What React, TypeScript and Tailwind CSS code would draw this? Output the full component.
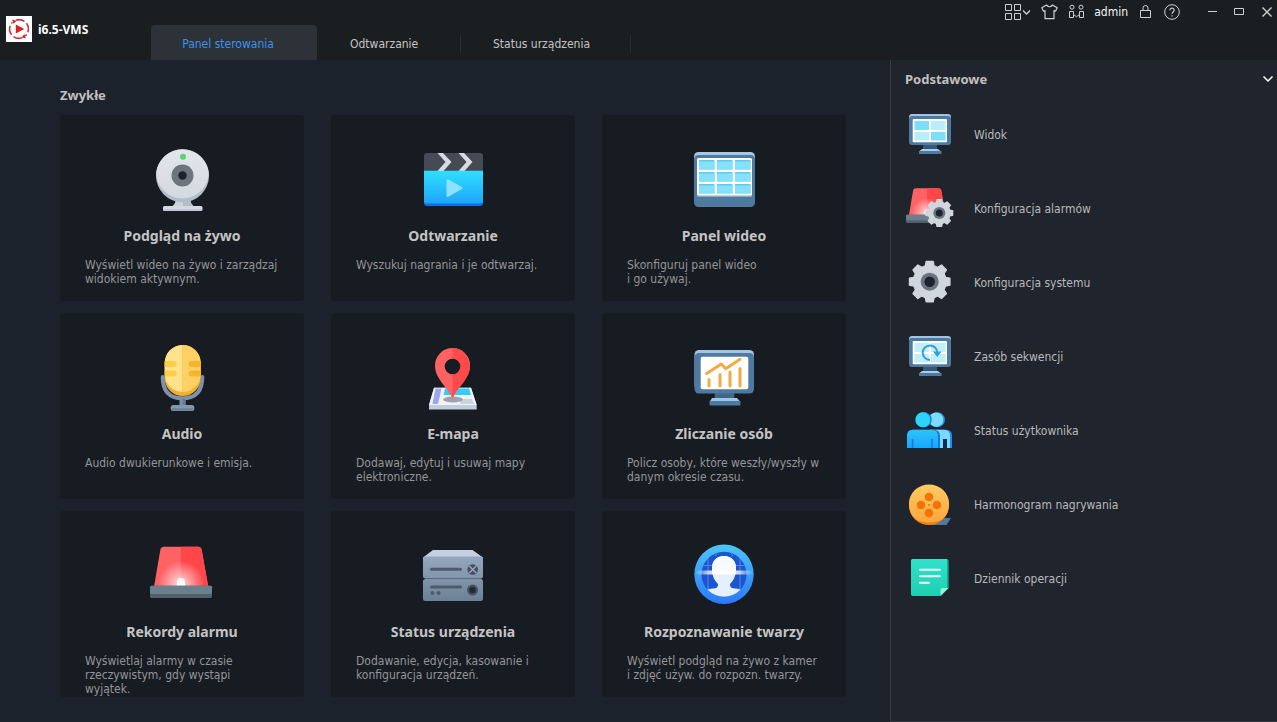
import type { ReactNode } from 'react';

const BODY_FONT = "font-['DejaVu_Sans_Condensed','DejaVu_Sans',sans-serif]";
const BOLD_FONT = "font-['Noto_Sans',sans-serif] font-bold";

function gearPath(cx: number, cy: number, r: number) {
  const points: string[] = [];
  for (let i = 0; i < 8; i += 1) {
    const base = (i * Math.PI) / 4 - Math.PI / 2;
    const corners: [number, number][] = [
      [-0.27, 0.8],
      [-0.17, 1],
      [0.17, 1],
      [0.27, 0.8],
    ];
    corners.forEach(([da, k]) => {
      points.push(`${(cx + Math.cos(base + da) * r * k).toFixed(2)} ${(cy + Math.sin(base + da) * r * k).toFixed(2)}`);
    });
  }
  return `M${points.join('L')}Z`;
}

function Gear({ cx, cy, r }: { cx: number; cy: number; r: number }) {
  return (
    <g>
      <path d={gearPath(cx, cy, r - 0.5)} fill="#d0d6de" stroke="#d0d6de" strokeWidth="1.4" strokeLinejoin="round" />
      <circle cx={cx} cy={cy} r={r * 0.43} fill="#6b737c" />
      <circle cx={cx} cy={cy} r={r * 0.25} fill="#1c2230" />
    </g>
  );
}

function CardSvg({ children }: { children: ReactNode }) {
  return (
    <svg viewBox="0 0 72 72" className="size-[72px]" aria-hidden="true">
      {children}
    </svg>
  );
}

function SideSvg({ children }: { children: ReactNode }) {
  return (
    <svg viewBox="0 0 48 48" className="size-12 shrink-0" aria-hidden="true">
      {children}
    </svg>
  );
}

function CameraIcon() {
  return (
    <CardSvg>
      <defs>
        <linearGradient id="cam" x1="0" y1="0" x2="0" y2="1">
          <stop offset="0" stopColor="#e3e6ec" />
          <stop offset="1" stopColor="#d3d9e0" />
        </linearGradient>
      </defs>
      <path d="M30 55h14l1 5 3 4H26l3-4z" fill="#cdd4dc" />
      <path d="M37 55h7l1 5 3 4H37z" fill="#b4bdc8" />
      <rect x="17" y="63" width="39.5" height="5" rx="1.5" fill="#d5dae2" />
      <rect x="17.5" y="66" width="38.5" height="2" rx="1" fill="#bfc8d2" />
      <circle cx="36.5" cy="32.7" r="26.5" fill="#b3bdc8" />
      <path d="M10.2 29.5a26.5 26.5 0 0 1 52.6 0C62.8 44.5 50 55.5 36.5 55.5S10.2 44.5 10.2 29.5z" fill="url(#cam)" />
      <circle cx="36.5" cy="32.5" r="11" fill="#6c747c" />
      <circle cx="36.5" cy="32.5" r="4.2" fill="#1c2230" />
      <circle cx="37" cy="13.7" r="3" fill="#55d76a" />
    </CardSvg>
  );
}

function ClapperIcon() {
  return (
    <CardSvg>
      <defs>
        <linearGradient id="clap" x1="0" y1="0" x2="0" y2="1">
          <stop offset="0" stopColor="#2fe0ff" />
          <stop offset="1" stopColor="#1fa5fb" />
        </linearGradient>
      </defs>
      <path d="M7 28V13q0-3 3-3h53q3 0 3 3v15z" fill="#474a55" />
      <path d="M20.500 10h5.500l8.500 9-8 9H20.500l8-9zM41.500 10h5.500l8.500 9-8 9H41.500l8-9z" fill="#d6dae2" />
      <path d="M7 40h59v20q0 3-3 3H10q-3 0-3-3z" fill="#0f6fe8" />
      <path d="M7 27.7h59V58q0 2.500-3 2.500H10q-3 0-3-2.500z" fill="url(#clap)" />
      <path d="M29.500 38v14.500q0 2 2 1.200L44.800 46q1.400-1 0-2L31.500 36.500q-2-.8-2 1.500z" fill="#8fe0ff" />
    </CardSvg>
  );
}

function VideoWallIcon() {
  return (
    <CardSvg>
      <rect x="6" y="9" width="61" height="48" rx="4.5" fill="#a5c8e6" />
      <rect x="6" y="12" width="61" height="52" rx="4.5" fill="#4f7a9f" />
      <rect x="9" y="16" width="55" height="38" rx="1.5" fill="#86abc6" />
      <rect x="9" y="15" width="55" height="37.5" rx="1.5" fill="#fff" />
      {[17, 29, 41].map((y) =>
        [11, 29, 47].map((x) => (
          <g key={`${x}-${y}`}>
            <rect x={x} y={y} width="15.5" height="9.5" fill="#5fcbf5" />
            <rect x={x} y={y + 1.5} width="15.5" height="8" fill="#85e0fc" />
          </g>
        )),
      )}
    </CardSvg>
  );
}

function MicrophoneIcon() {
  return (
    <CardSvg>
      <path d="M16.700 36q0 21.300 19.800 21.300T56.300 36" fill="none" stroke="#7d92a8" strokeWidth="4" strokeLinecap="round" />
      <path d="M33.500 58h6v8h-6z" fill="#7d92a8" />
      <path d="M36.500 58h3v8h-3z" fill="#677c92" />
      <rect x="24.7" y="64" width="23.6" height="6" rx="2.5" fill="#8498ac" />
      <rect x="25.5" y="67" width="22" height="3" rx="1.5" fill="#6f849a" />
      <rect x="18.7" y="4" width="36" height="51" rx="18" fill="#f3ae33" />
      <path d="M36.500 4a18 18 0 0 0-17.800 18v11a18 18 0 0 0 17.800 18z" fill="#ffe38c" />
      <path d="M36.500 4a18 18 0 0 1 18.200 18v11a18 18 0 0 1-18.200 18z" fill="#ffd063" />
      <path d="M18.700 20h9q3 0 3 3t-3 3h-9zM18.700 29.500h9q3 0 3 3t-3 3h-9z" fill="#fccd48" />
      <path d="M54.700 20h-9q-3 0-3 3t3 3h9zM54.700 29.500h-9q-3 0-3 3t3 3h9z" fill="#f6b52c" />
    </CardSvg>
  );
}

function MapIcon() {
  return (
    <CardSvg>
      <path d="M17 46.700h37L59.700 64v4.500H12V64z" fill="#c3ccda" />
      <path d="M17 46.700h37L59.700 64H12z" fill="#eef2fa" />
      <path d="M18.500 47.500h6L21 63h-5.500z" fill="#9aa8ea" />
      <path d="M28 47.500h24l2 6.500H26.500z" fill="#35cdf5" />
      <path d="M44 58h11l2 5H43z" fill="#ccd2df" />
      <ellipse cx="36" cy="58.5" rx="10" ry="3" fill="#a3a0ac" />
      <path d="M35.500 7A17.500 17.500 0 0 0 18 24.500C18 38 30 45 35.500 57.500C41 45 53 38 53 24.500A17.500 17.500 0 0 0 35.500 7z" fill="#ff6262" />
      <path d="M35.500 7v50.500C41 45 53 38 53 24.500A17.500 17.500 0 0 0 35.500 7z" fill="#ff4a4c" />
      <circle cx="35.5" cy="25.5" r="7.8" fill="#171b22" />
    </CardSvg>
  );
}

function ChartMonitorIcon() {
  return (
    <CardSvg>
      <path d="M26.700 50h19.600v9H26.700z" fill="#3f6788" />
      <path d="M24 57h25l3.500 4H21.500z" fill="#9cc5e6" />
      <rect x="21.5" y="60" width="31" height="4.5" rx="1" fill="#4f7a9f" />
      <rect x="6.5" y="9" width="59.5" height="40" rx="4.5" fill="#a5c3e8" />
      <rect x="6.5" y="12" width="59.5" height="40.5" rx="4.5" fill="#4f7a9f" />
      <rect x="12.7" y="15.7" width="47.6" height="32.5" rx="2" fill="#fff" />
      <path d="M18.700 32.500L33.300 23l4.400 4.700L52 18.300M21 38.500V45M32 33.500V45M42 31V45M52 27.500V45" fill="none" stroke="#f2ab42" strokeWidth="3" strokeLinecap="round" strokeLinejoin="round" />
    </CardSvg>
  );
}

function Siren() {
  return (
    <g>
      <path d="M8 48L14.300 11q.6-3.300 4-3.300h33.400q3.400 0 4 3.300L62.300 48z" fill="#ff6264" />
      <path d="M35 7.700h16.700q3.400 0 4 3.300L62.300 48H35z" fill="#ff474a" />
      <path d="M8 48L14.300 11q.6-3.300 4-3.300h33.400q3.400 0 4 3.300L62.300 48z" fill="url(#glow)" />
      <path d="M31 47v-4a4 4 0 0 1 8 0v4z" fill="#fff" />
      <rect x="4" y="46.7" width="62" height="12.3" rx="1.5" fill="#526069" />
      <rect x="4" y="46.7" width="62" height="8.3" rx="1.5" fill="#6c7f8c" />
    </g>
  );
}

function SirenGlow() {
  return (
    <defs>
      <radialGradient id="glow" gradientUnits="userSpaceOnUse" cx="35" cy="45" r="23">
        <stop offset="0" stopColor="#fff" />
        <stop offset=".25" stopColor="#fff" stopOpacity=".6" />
        <stop offset="1" stopColor="#fff" stopOpacity="0" />
      </radialGradient>
    </defs>
  );
}

function SirenIcon() {
  return (
    <CardSvg>
      <SirenGlow />
      <Siren />
    </CardSvg>
  );
}

function ServerIcon() {
  return (
    <CardSvg>
      <defs>
        <linearGradient id="srv" gradientUnits="userSpaceOnUse" x1="0" y1="17" x2="0" y2="62">
          <stop offset="0" stopColor="#96a8bf" />
          <stop offset="1" stopColor="#6b8296" />
        </linearGradient>
      </defs>
      <path d="M16 11h39.500L66 18.500V21H6v-2.500z" fill="#c3d0e0" />
      <rect x="6" y="17.5" width="60" height="22" rx="2.5" fill="url(#srv)" />
      <path d="M8 39.700h56" stroke="#5b6c7f" strokeWidth="1.2" />
      <rect x="6" y="40" width="60" height="22" rx="2.5" fill="url(#srv)" />
      <path d="M14.500 30.300h29M14.500 48h29" stroke="#4d5b6d" strokeWidth="3" strokeLinecap="round" />
      <circle cx="15.5" cy="54" r="2" fill="#4d5b6d" />
      <circle cx="21.5" cy="54" r="2" fill="#4d5b6d" />
      <circle cx="55.7" cy="30.5" r="5.3" fill="#434f60" />
      <path d="M52.200 27l7 7M59.200 27l-7 7" stroke="#97a6b8" strokeWidth="1.6" />
      <circle cx="55.5" cy="51" r="5.5" fill="#48535f" />
      <circle cx="55.5" cy="51" r="3.3" fill="#252b35" />
    </CardSvg>
  );
}

function FaceIcon() {
  return (
    <CardSvg>
      <defs>
        <linearGradient id="ring" x1="0" y1="0" x2="0" y2="1">
          <stop offset="0" stopColor="#4cc6f8" />
          <stop offset="1" stopColor="#2c78fb" />
        </linearGradient>
        <linearGradient id="scan" x1="0" y1="0" x2="1" y2="0">
          <stop offset="0" stopColor="#fff" stopOpacity=".1" />
          <stop offset=".25" stopColor="#fff" stopOpacity=".8" />
          <stop offset=".75" stopColor="#fff" stopOpacity=".8" />
          <stop offset="1" stopColor="#fff" stopOpacity=".1" />
        </linearGradient>
        <clipPath id="disc">
          <circle cx="36" cy="35.3" r="22.5" />
        </clipPath>
      </defs>
      <circle cx="36" cy="35.3" r="29.7" fill="url(#ring)" />
      <circle cx="36" cy="35.3" r="22.5" fill="#1c55cf" />
      <g clipPath="url(#disc)">
        <path d="M20 12v48M52 12v48M12 26.500h48M12 50h48M28 13v4M44 13v4" stroke="#4f8bee" strokeWidth="1" />
        <path d="M36 17c-7.500 0-12 5-12 12 0 9 3 13 6 16 0 3-1 4-4 4.500-4 .5-6 .5-8 2.500L24 60h24l6-8c-2-2-4-2-8-2.500-3-.5-4-1.500-4-4.500 3-3 6-7 6-16 0-7-4.500-12-12-12z" fill="#e4efff" />
        <path d="M36 17c-7.500 0-12 5-12 12v6h24v-6c0-7-4.500-12-12-12z" fill="#f7fbff" />
      </g>
      <rect x="8" y="31.5" width="56" height="4" rx="2" fill="url(#scan)" />
    </CardSvg>
  );
}

function SideMonitor({ children }: { children: ReactNode }) {
  return (
    <SideSvg>
      <path d="M17 34h14v7H17z" fill="#35597a" />
      <path d="M16 39h16l3.500 3h-23z" fill="#a9cbe8" />
      <rect x="13" y="41" width="22.5" height="3" fill="#4f7a9f" />
      <rect x="3" y="4" width="42" height="28" rx="3" fill="#9fc4e6" />
      <rect x="3" y="6" width="42" height="29" rx="3" fill="#4f7a9f" />
      <rect x="6.7" y="9" width="34.3" height="23.3" rx="1" fill="#fff" />
      {children}
    </SideSvg>
  );
}

function ViewIcon() {
  return (
    <SideMonitor>
      <path d="M8.500 11H23v9H8.500zM25 22h14.500v8.500H25z" fill="#7edffc" />
      <path d="M25 11h14.500v9H25zM8.500 22H23v8.500H8.500z" fill="#b9edfc" />
    </SideMonitor>
  );
}

function SequenceIcon() {
  return (
    <SideMonitor>
      <path d="M8.500 11H23v9H8.500zM25 22h14.500v8.500H25zM25 11h14.500v9H25zM8.500 22H23v8.500H8.500z" fill="#c3eefc" />
      <path d="M24 28a7.300 7.300 0 1 1 7.300-7.500" fill="none" stroke="#2f9fd9" strokeWidth="2" />
      <path d="M27 19.500h8.500l-4.200 5.500z" fill="#2f9fd9" />
    </SideMonitor>
  );
}

function AlarmConfigIcon() {
  return (
    <SideSvg>
      <SirenGlow />
      <g transform="translate(-2.6 -1) scale(.68)">
        <Siren />
      </g>
      <Gear cx={33.3} cy={29} r={14} />
    </SideSvg>
  );
}

function SystemConfigIcon() {
  return (
    <SideSvg>
      <Gear cx={23.7} cy={23.7} r={21} />
    </SideSvg>
  );
}

function UsersIcon() {
  return (
    <SideSvg>
      <defs>
        <linearGradient id="usr" x1="0" y1="0" x2="0" y2="1">
          <stop offset="0" stopColor="#2bc4f8" />
          <stop offset="1" stopColor="#1ba6fb" />
        </linearGradient>
      </defs>
      <circle cx="31.5" cy="13.7" r="7.5" fill="#2a8cf3" />
      <circle cx="30" cy="13.7" r="7.3" fill="#7bdcff" />
      <path d="M24 23.700h16q6 0 6 6V42H24z" fill="#2589f5" />
      <path d="M24 23.700h14q6 0 6 6V42H24z" fill="#7bd8ff" />
      <path d="M37 33h4v9h-4z" fill="#142a4c" />
      <circle cx="18" cy="13.7" r="7.7" fill="#1277e8" />
      <circle cx="16.8" cy="13.7" r="7.5" fill="#2cd4fb" />
      <path d="M1 42V30q0-6.300 6-6.300h20q7 0 7 6.300v12z" fill="#1277f0" />
      <path d="M1 42V30q0-6.300 6-6.300h18q7 0 7 6.300v12z" fill="url(#usr)" />
      <path d="M6.500 33v9M26 33v9" stroke="#1277f0" strokeWidth="1.6" />
    </SideSvg>
  );
}

function ReelIcon() {
  return (
    <SideSvg>
      <defs>
        <linearGradient id="reel" x1="0" y1="0" x2="0" y2="1">
          <stop offset="0" stopColor="#ffcb62" />
          <stop offset="1" stopColor="#ffa63d" />
        </linearGradient>
      </defs>
      <path d="M30 38h15l-4.500 7H24z" fill="#4f7a9f" />
      <circle cx="23" cy="25" r="20" fill="#ee8114" />
      <path d="M3 23.500a20 19 0 0 1 40 0q0 19-20 19T3 23.500z" fill="url(#reel)" />
      <g fill="#f27405">
        <circle cx="23" cy="17" r="4.3" />
        <circle cx="15" cy="25" r="4.3" />
        <circle cx="31" cy="25" r="4.3" />
        <circle cx="23" cy="33" r="4.3" />
        <circle cx="23" cy="25" r="1" />
      </g>
    </SideSvg>
  );
}

function NoteIcon() {
  return (
    <SideSvg>
      <defs>
        <linearGradient id="note" x1="0" y1="0" x2="0" y2="1">
          <stop offset="0" stopColor="#30e2cb" />
          <stop offset="1" stopColor="#1fcfb0" />
        </linearGradient>
      </defs>
      <path d="M7 5h33.700q2 0 2 2v27l-8 8H7q-2 0-2-2V7q0-2 2-2z" fill="#16a98c" />
      <path d="M7 5h34v29l-8 8H7q-2 0-2-2V7q0-2 2-2z" fill="url(#note)" />
      <path d="M42.500 34l-8 8v-6q0-2 2-2z" fill="#8df5e2" />
      <path d="M14 15.700h20M14 22.300h20M14 28.700h9" stroke="#e9fffb" strokeWidth="2" strokeLinecap="round" />
    </SideSvg>
  );
}

function LogoIcon() {
  return (
    <svg viewBox="0 0 26 26" className="size-[26px]" aria-hidden="true">
      <rect width="26" height="26" fill="#fff" />
      <g fill="none" stroke="#c4383c" strokeWidth="1.6">
        <path d="M10 4.200a9.400 9.400 0 0 1 8.500 1.200M20.500 7.200a9.400 9.400 0 0 1 1.300 9M16 21.800a9.400 9.400 0 0 1-8.500-1.200M5.500 18.800a9.400 9.400 0 0 1-1.300-9M20.600 18.600l-1.200 1.400M5.400 7.400l1-1.200" />
      </g>
      <path d="M6.200 3.600l4.300 1.200-3 3zM19.800 22.400l-4.300-1.200 3-3z" fill="#c4262b" />
      <path d="M9.800 8.500L18.300 13l-8.500 4.500z" fill="#dd1f26" />
    </svg>
  );
}

const cards = [
  { title: 'Podgląd na żywo', text: 'Wyświetl wideo na żywo i zarządzaj\nwidokiem aktywnym.', Icon: CameraIcon },
  { title: 'Odtwarzanie', text: 'Wyszukuj nagrania i je odtwarzaj.', Icon: ClapperIcon },
  { title: 'Panel wideo', text: 'Skonfiguruj panel wideo\ni go używaj.', Icon: VideoWallIcon },
  { title: 'Audio', text: 'Audio dwukierunkowe i emisja.', Icon: MicrophoneIcon },
  { title: 'E-mapa', text: 'Dodawaj, edytuj i usuwaj mapy\nelektroniczne.', Icon: MapIcon },
  { title: 'Zliczanie osób', text: 'Policz osoby, które weszły/wyszły w\ndanym okresie czasu.', Icon: ChartMonitorIcon },
  { title: 'Rekordy alarmu', text: 'Wyświetlaj alarmy w czasie\nrzeczywistym, gdy wystąpi\nwyjątek.', Icon: SirenIcon },
  { title: 'Status urządzenia', text: 'Dodawanie, edycja, kasowanie i\nkonfiguracja urządzeń.', Icon: ServerIcon },
  { title: 'Rozpoznawanie twarzy', text: 'Wyświetl podgląd na żywo z kamer\ni zdjęć używ. do rozpozn. twarzy.', Icon: FaceIcon },
];

const sideItems = [
  { label: 'Widok', Icon: ViewIcon },
  { label: 'Konfiguracja alarmów', Icon: AlarmConfigIcon },
  { label: 'Konfiguracja systemu', Icon: SystemConfigIcon },
  { label: 'Zasób sekwencji', Icon: SequenceIcon },
  { label: 'Status użytkownika', Icon: UsersIcon },
  { label: 'Harmonogram nagrywania', Icon: ReelIcon },
  { label: 'Dziennik operacji', Icon: NoteIcon },
];

function Toolbar() {
  return (
    <div className="flex h-6 items-center pr-[5px] text-[#d0d0d0]">
      <button type="button" aria-label="Moduły" className="mr-2.5">
        <svg viewBox="0 0 26 16" className="h-4 w-[26px]" fill="none" stroke="currentColor">
          <path d="M.5.5h6v6h-6zM9.500.5h6v6h-6zM.5 9.500h6v6h-6zM9.500 9.500h6v6h-6z" />
          <path d="M18 6.500l3.500 3.500L25 6.500" strokeWidth="1.3" />
        </svg>
      </button>
      <button type="button" aria-label="Motyw" className="mr-[11px]">
        <svg viewBox="0 0 17 16" className="h-4 w-[17px]" fill="none" stroke="currentColor" strokeLinejoin="round">
          <path d="M5.500 1L.8 3.700l1.700 3.500L4 6.600v8.100h9V6.600l1.500.6 1.700-3.500L11.500 1Q8.500 4.500 5.500 1z" strokeWidth="1.2" />
        </svg>
      </button>
      <button type="button" aria-label="Użytkownicy" className="mr-2.5">
        <svg viewBox="0 0 15 16" className="h-4 w-[15px]" fill="none" stroke="currentColor">
          <circle cx="3" cy="3.2" r="2" />
          <circle cx="12" cy="3.2" r="2" />
          <path d="M4.500 10.500v-3h-4v6h4v-3l3 2.200 3-2.200v3h4v-6h-4v3" />
        </svg>
      </button>
      <span className="mr-3 leading-4 text-[#f4f4f4]">admin</span>
      <button type="button" aria-label="Zablokuj" className="mr-[13px]">
        <svg viewBox="0 0 11 16" className="h-4 w-[11px]" fill="none" stroke="currentColor">
          <path d="M.5 6.500h10v7H.5zM3 6.500V4a2.500 2.500 0 0 1 5 0v2.500" />
        </svg>
      </button>
      <button type="button" aria-label="Pomoc" className="mr-7">
        <svg viewBox="0 0 16 16" className="size-4" fill="none" stroke="currentColor">
          <circle cx="8" cy="8" r="7.3" />
          <path d="M5.900 6.200a2.100 2.100 0 1 1 3.300 1.700Q8 8.700 8 9.800" strokeWidth="1.2" />
          <path d="M8 11.200v1.300" strokeWidth="1.2" />
        </svg>
      </button>
      <button type="button" aria-label="Minimalizuj" className="mr-4">
        <svg viewBox="0 0 10 10" className="size-2.5" stroke="currentColor">
          <path d="M0 4.500h9" />
        </svg>
      </button>
      <button type="button" aria-label="Maksymalizuj" className="mr-[18px]">
        <svg viewBox="0 0 10 10" className="size-2.5" fill="none" stroke="currentColor">
          <path d="M.5 1.500h9v6h-9z" />
        </svg>
      </button>
      <button type="button" aria-label="Zamknij">
        <svg viewBox="0 0 10 10" className="size-2.5" stroke="currentColor">
          <path d="M.5.5l9 9M9.500.5l-9 9" strokeWidth="1.4" />
        </svg>
      </button>
    </div>
  );
}

export default function App() {
  return (
    <div className={`flex min-h-screen flex-col bg-[#1c222b] text-[12px] leading-[14px] ${BODY_FONT}`}>
      <header className="flex h-[60px] justify-between bg-[#1b1e21]">
        <div className="flex">
          <div className="flex w-[151px] items-center gap-1.5 pb-0.5 pl-1.5 text-white">
            <LogoIcon />
            <span className={`pt-0.5 text-[12px] leading-4 ${BOLD_FONT}`}>i6.5-VMS</span>
          </div>
          <nav className="flex items-end text-[#c4c4c4]">
            <button type="button" className="h-[35px] w-[166px] rounded-t-sm bg-[#2d3138] pt-0.5 pr-3 text-[#3d93ea]">
              Panel sterowania
            </button>
            <button type="button" className="flex h-[35px] w-36 items-center justify-between pt-0.5 pl-[33px]">
              Odtwarzanie
              <span className="h-[18px] w-px bg-[#292c31]" />
            </button>
            <button type="button" className="flex h-[35px] w-[170px] items-center justify-between pt-0.5 pl-8">
              Status urządzenia
              <span className="h-[18px] w-px bg-[#292c31]" />
            </button>
          </nav>
        </div>
        <Toolbar />
      </header>

      <div className="flex flex-1">
        <main className="flex-1 pt-[26px] pr-11 pl-[60px]">
          <h2 className={`mb-[11px] text-[13px] leading-[18px] text-[#c0c0c0] ${BOLD_FONT}`}>Zwykłe</h2>
          <div className="grid grid-cols-3 gap-x-[27px] gap-y-3">
            {cards.map(({ title, text, Icon }) => (
              <button
                key={title}
                type="button"
                className="flex min-h-[186px] flex-col items-center rounded bg-[#171b22] pt-7"
              >
                <Icon />
                <span className={`mt-[11px] text-[14px] leading-5 text-[#c4c4c4] ${BOLD_FONT}`}>{title}</span>
                <span className="mt-3 self-start pl-[25px] text-left whitespace-pre text-[#949698]">{text}</span>
              </button>
            ))}
          </div>
        </main>

        <aside className="w-[387px] border-b border-l border-[#353a42] bg-[#20242c]">
          <button type="button" className="flex h-[38px] w-full items-center justify-between pr-1 pl-3.5">
            <span className={`text-[13px] leading-[18px] text-[#c0c0c0] ${BOLD_FONT}`}>Podstawowe</span>
            <svg viewBox="0 0 10 8" className="h-2 w-2.5" fill="none" stroke="#fff" strokeWidth="1.5" aria-hidden="true">
              <path d="M.5 1.500L5 6l4.500-4.500" />
            </svg>
          </button>
          <ul className="mt-3 flex flex-col gap-[26px] pl-[15px]">
            {sideItems.map(({ label, Icon }) => (
              <li key={label}>
                <button type="button" className="flex items-center gap-5 text-[#b8babd]">
                  <Icon />
                  <span className="pt-0.5">{label}</span>
                </button>
              </li>
            ))}
          </ul>
        </aside>
      </div>
    </div>
  );
}
